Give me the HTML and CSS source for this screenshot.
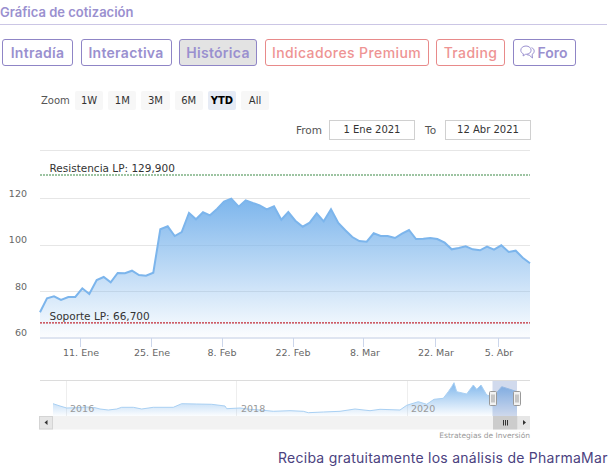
FILE: index.html
```html
<!DOCTYPE html>
<html lang="es">
<head>
    <meta charset="UTF-8">
    <meta name="viewport" content="width=device-width, initial-scale=1.0">
    <title>Gráfica de cotización</title>
    <link rel="stylesheet" href="styles.css">
</head>
<body>
    <h2 class="section-title">Gráfica de cotización</h2>

    <nav class="tabs">
        <a href="#" class="tab">Intradía</a>
        <a href="#" class="tab">Interactiva</a>
        <a href="#" class="tab tab-active">Histórica</a>
        <a href="#" class="tab tab-red">Indicadores Premium</a>
        <a href="#" class="tab tab-red">Trading</a>
        <a href="#" class="tab tab-forum">
            <svg class="forum-icon" width="15" height="15" viewBox="0 0 15 15" fill="none" stroke="currentColor" stroke-width="1">
                <path d="M6 1C3 1 .8 2.900 .8 5.200c0 1.600 1 3 2.600 3.700l-.3 2.100 2.400-1.700h.6c2.900 0 5-1.800 5-4.100S8.900 1 6 1z"/>
                <path d="M11.600 2.600c1.600.7 2.600 2 2.600 3.500 0 1.400-.8 2.600-2.100 3.300l.4 3.600-3.300-2.900c-.9 0-1.700-.2-2.400-.5"/>
            </svg>
            Foro
        </a>
    </nav>

    <div class="chart">
        <div class="range-row">
            <span class="range-label zoom-label">Zoom</span>
            <button class="range-btn">1W</button>
            <button class="range-btn">1M</button>
            <button class="range-btn">3M</button>
            <button class="range-btn">6M</button>
            <button class="range-btn range-btn-on">YTD</button>
            <button class="range-btn">All</button>
        </div>
        <div class="date-row">
            <span class="range-label date-from">From</span>
            <span class="date-box">1 Ene 2021</span>
            <span class="range-label date-to">To</span>
            <span class="date-box">12 Abr 2021</span>
        </div>

        <svg class="plot" width="540" height="286" viewBox="0 145 540 286">
            <defs>
                <linearGradient id="areaFill" x1="0" y1="198" x2="0" y2="338" gradientUnits="userSpaceOnUse">
                    <stop offset="0" stop-color="#7cb5ec"/>
                    <stop offset="1" stop-color="#7cb5ec" stop-opacity="0.02"/>
                </linearGradient>
                <linearGradient id="navFill" x1="0" y1="382" x2="0" y2="416" gradientUnits="userSpaceOnUse">
                    <stop offset="0" stop-color="#7cb5ec"/>
                    <stop offset="1" stop-color="#7cb5ec" stop-opacity="0.03"/>
                </linearGradient>
            </defs>

            <!-- grid -->
            <g class="grid">
                <path d="M40 150.500H530"/>
                <path d="M40 198.500H530"/>
                <path d="M40 245.500H530"/>
                <path d="M40 291.500H530"/>
            </g>

            <!-- price area -->
            <path fill="url(#areaFill)" d="M40 312.300 47 298.300 54 296.300 61 300 68.300 297 75.300 297 82.300 288.300 89.300 294 96.700 280 103.700 277 110.700 282.300 117.700 273 125 273.300 132 270.700 139 275 146 275.700 153.300 272.700 160.300 229.300 167.700 226.300 174.700 236 181.700 232 189 213 196 219.300 203 212.300 210 215.300 217 209 224 201.700 231.300 198.700 238.700 206.700 245.700 200.300 252.700 203 259.700 205.300 266.700 209.300 274 206.300 281.300 219.700 288.300 212 295.300 220.700 302.700 226.700 309.700 222.700 316.700 213.300 323.700 221.300 331 209.300 338.300 223 345.300 230.300 352.300 237 359.300 241 366.700 241.700 373.700 233.300 380.700 236 387.700 236 395 238 402 233.700 409 230 416 239 423.300 238.700 430.300 238 437.300 239 444.700 242.700 451.700 249.300 458.700 248 465.700 246.300 472.700 249.300 480 250.300 487 246.700 494 249.700 501.300 245.300 508.700 252 515.700 250.700 522.700 257.700 530 263.300V337H40z"/>
            <path class="price-line" d="M40 312.300 47 298.300 54 296.300 61 300 68.300 297 75.300 297 82.300 288.300 89.300 294 96.700 280 103.700 277 110.700 282.300 117.700 273 125 273.300 132 270.700 139 275 146 275.700 153.300 272.700 160.300 229.300 167.700 226.300 174.700 236 181.700 232 189 213 196 219.300 203 212.300 210 215.300 217 209 224 201.700 231.300 198.700 238.700 206.700 245.700 200.300 252.700 203 259.700 205.300 266.700 209.300 274 206.300 281.300 219.700 288.300 212 295.300 220.700 302.700 226.700 309.700 222.700 316.700 213.300 323.700 221.300 331 209.300 338.300 223 345.300 230.300 352.300 237 359.300 241 366.700 241.700 373.700 233.300 380.700 236 387.700 236 395 238 402 233.700 409 230 416 239 423.300 238.700 430.300 238 437.300 239 444.700 242.700 451.700 249.300 458.700 248 465.700 246.300 472.700 249.300 480 250.300 487 246.700 494 249.700 501.300 245.300 508.700 252 515.700 250.700 522.700 257.700 530 263.300"/>

            <!-- support and resistance -->
            <path class="level level-high" d="M40 175H530"/>
            <path class="level level-low" d="M40 322.800H530"/>
            <text class="level-text" x="49.500" y="172">Resistencia LP: 129,900</text>
            <text class="level-text" x="49.500" y="320">Soporte LP: 66,700</text>

            <!-- axes -->
            <g class="axis-y">
                <text x="27" y="196.500">120</text>
                <text x="27" y="243">100</text>
                <text x="27" y="289.500">80</text>
                <text x="27" y="336">60</text>
            </g>
            <path class="axis-line" d="M40 338H530"/>
            <g class="ticks">
                <path d="M80.500 338v9M151.500 338v9M222.500 338v9M293.500 338v9M363.500 338v9M435.500 338v9M498.500 338v9"/>
            </g>
            <g class="axis-x">
                <text x="81" y="355.500">11. Ene</text>
                <text x="152" y="355.500">25. Ene</text>
                <text x="222" y="355.500">8. Feb</text>
                <text x="293" y="355.500">22. Feb</text>
                <text x="365" y="355.500">8. Mar</text>
                <text x="436" y="355.500">22. Mar</text>
                <text x="499" y="355.500">5. Abr</text>
            </g>

            <!-- navigator -->
            <path class="nav-top" d="M40 380.500H530"/>
            <path class="nav-grid" d="M66.500 381V416M236.500 381V416M407.500 381V416"/>
            <path fill="url(#navFill)" d="M53 403.700 60 406 66.700 408 76.700 407.700 86.700 407 95 407.700 100 409 108.300 410 116.700 409 121.700 407.300 133.300 407.300 141.700 409 153.300 407.300 173.300 407.300 181.700 403.700 196.700 404 211.700 404.300 225 406 226.700 408.700 240 408 250 409.300 263.300 410.300 273.300 411.300 290 410.700 303.300 411.300 308.300 412.700 323.300 412 340 411.300 355 409 370 410.700 380 409.300 400 410 406.700 405.300 418.300 401.700 426.700 404.300 434 399.300 443.300 398.300 448.300 391.700 451.700 386.700 454 382.700 456.700 391.700 466.700 394 473.300 385 476.700 389.300 481 385 486.700 395 493.300 396.700 501.700 386.700 510 389.300 517 391.700V416H53z"/>
            <path class="nav-line" d="M53 403.700 60 406 66.700 408 76.700 407.700 86.700 407 95 407.700 100 409 108.300 410 116.700 409 121.700 407.300 133.300 407.300 141.700 409 153.300 407.300 173.300 407.300 181.700 403.700 196.700 404 211.700 404.300 225 406 226.700 408.700 240 408 250 409.300 263.300 410.300 273.300 411.300 290 410.700 303.300 411.300 308.300 412.700 323.300 412 340 411.300 355 409 370 410.700 380 409.300 400 410 406.700 405.300 418.300 401.700 426.700 404.300 434 399.300 443.300 398.300 448.300 391.700 451.700 386.700 454 382.700 456.700 391.700 466.700 394 473.300 385 476.700 389.300 481 385 486.700 395 493.300 396.700 501.700 386.700 510 389.300 517 391.700"/>
            <g class="nav-years">
                <text x="70" y="412">2016</text>
                <text x="241" y="412">2018</text>
                <text x="411" y="412">2020</text>
            </g>
            <rect class="nav-mask" x="492.500" y="381" width="24.500" height="35"/>
            <g class="nav-handle">
                <rect x="489.500" y="391.500" width="7" height="14" rx="1"/>
                <path d="M492 394.500v8M494 394.500v8"/>
                <rect x="513.500" y="391.500" width="7" height="14" rx="1"/>
                <path d="M516 394.500v8M518 394.500v8"/>
            </g>

            <!-- scrollbar -->
            <rect class="scroll-track" x="39" y="416" width="491" height="13.500"/>
            <rect class="scroll-btn" x="39.500" y="416.500" width="13" height="12.500"/>
            <path class="scroll-arrow" d="M47.500 420v5l-3-2.500z"/>
            <rect class="scroll-thumb" x="493" y="416" width="24.500" height="13.500"/>
            <path class="scroll-grip" d="M503.500 420v5.500M505.500 420v5.500M507.500 420v5.500"/>
            <rect class="scroll-btn-end" x="518" y="416" width="12" height="13.500"/>
            <path class="scroll-arrow" d="M523 420v5l3-2.500z"/>
        </svg>

        <div class="credit">Estrategias de Inversión</div>
    </div>

    <p class="promo">Reciba gratuitamente los análisis de PharmaMar</p>
</body>
</html>
```

FILE: styles.css
```css
body {
    font-family: Inter, "Open Sans", sans-serif;
    margin: 0;
    padding: 0;
    width: 613px;
    height: 471px;
    overflow: hidden;
    background-color: white;
}
.section-title {
    box-sizing: content-box;
    width: 607px;
    height: 24px;
    margin: 0;
    border-bottom: 1px solid #cbc6e5;
    font-size: 13px;
    font-weight: 600;
    line-height: 25px;
    color: #9a90cf;
}
.tabs {
    display: flex;
    margin: 14px 0 0 2px;
    height: 27px;
}
.tab {
    display: flex;
    align-items: center;
    justify-content: center;
    box-sizing: border-box;
    height: 27px;
    margin-right: 7.500px;
    border: 1px solid #8f85c6;
    border-radius: 3px;
    font-size: 14px;
    font-weight: 600;
    letter-spacing: 0.3px;
    color: #9a90cf;
    text-decoration: none;
}
.tab:nth-child(1) { width: 71px; }
.tab:nth-child(2) { width: 91px; }
.tab:nth-child(3) { width: 78px; background-color: #e3e3e3; }
.tab:nth-child(4) { width: 164px; }
.tab:nth-child(5) { width: 69px; }
.tab:nth-child(6) { width: 63px; }
.tab-red {
    border-color: #e88a8a;
    color: #ee9494;
    font-weight: 500;
    letter-spacing: 0.4px;
}
.tab-forum {
    gap: 2px;
    letter-spacing: 0;
}
.forum-icon {
    flex: none;
}

.chart {
    width: 540px;
}
.range-row {
    display: flex;
    align-items: center;
    height: 19px;
    margin: 25px 0 0 41px;
    gap: 5px;
}
.range-label {
    font-family: "DejaVu Sans", sans-serif;
    font-size: 10.500px;
    color: #555;
}
.zoom-label {
    width: 29px;
    font-size: 10px;
}
.range-btn {
    width: 28.200px;
    height: 19px;
    padding: 0;
    border: none;
    border-radius: 2px;
    background-color: #f7f7f7;
    font-family: "DejaVu Sans", sans-serif;
    font-size: 10px;
    color: #333;
}
.range-btn-on {
    background-color: #e6ebf5;
    font-weight: bold;
    color: black;
}
.date-row {
    display: flex;
    align-items: center;
    height: 20px;
    margin: 10px 0 0 296px;
}
.date-from {
    width: 33px;
}
.date-to {
    width: 20px;
    margin-left: 10px;
}
.date-box {
    box-sizing: border-box;
    width: 86px;
    height: 20px;
    border: 1px solid #d0d0d0;
    font-family: "DejaVu Sans", sans-serif;
    font-size: 10px;
    line-height: 18px;
    text-align: center;
    color: #333;
}

.plot {
    display: block;
    margin-top: 5px;
    font-family: "DejaVu Sans", sans-serif;
}
.grid path {
    stroke: #e6e6e6;
    stroke-width: 1;
}
.price-line {
    fill: none;
    stroke: #7cb5ec;
    stroke-width: 2;
}
.level {
    fill: none;
    stroke-width: 1.200;
    stroke-dasharray: 2 1;
}
.level-high { stroke: #3d8a47; }
.level-low { stroke: #c22a35; }
.level-text {
    font-size: 10.500px;
    fill: #333;
}
.axis-y text {
    font-size: 9.500px;
    fill: #666;
    text-anchor: end;
}
.axis-x text {
    font-size: 9.500px;
    fill: #666;
    text-anchor: middle;
}
.axis-line {
    stroke: #dfe5f1;
    stroke-width: 2;
}
.ticks path {
    stroke: #ccd6eb;
    stroke-width: 1;
}
.nav-top {
    stroke: #dcdcdc;
    stroke-width: 1;
}
.nav-grid {
    stroke: #eee;
    stroke-width: 1;
}
.nav-line {
    fill: none;
    stroke: #a9d0f3;
    stroke-width: 1;
}
.nav-years text {
    font-size: 9.500px;
    fill: #999;
}
.nav-mask {
    fill: #6685c2;
    fill-opacity: 0.3;
}
.nav-handle rect {
    fill: #f2f2f2;
    stroke: #999;
}
.nav-handle path {
    stroke: #999;
    stroke-width: 1;
}
.scroll-track {
    fill: #f2f2f2;
}
.scroll-btn {
    fill: #e6e6e6;
    stroke: #d4d4d4;
}
.scroll-btn-end {
    fill: #e6e6e6;
}
.scroll-thumb {
    fill: #ccc;
}
.scroll-grip {
    stroke: #333;
    stroke-width: 1;
}
.scroll-arrow {
    fill: #333;
}
.credit {
    margin: 0;
    padding-right: 10px;
    font-family: "DejaVu Sans", sans-serif;
    font-size: 7.500px;
    line-height: 10px;
    text-align: right;
    color: #999;
}
.promo {
    margin: 8px 0 0 278px;
    font-size: 14px;
    letter-spacing: 0.26px;
    line-height: 18px;
    color: #4b4280;
    white-space: nowrap;
}
```
